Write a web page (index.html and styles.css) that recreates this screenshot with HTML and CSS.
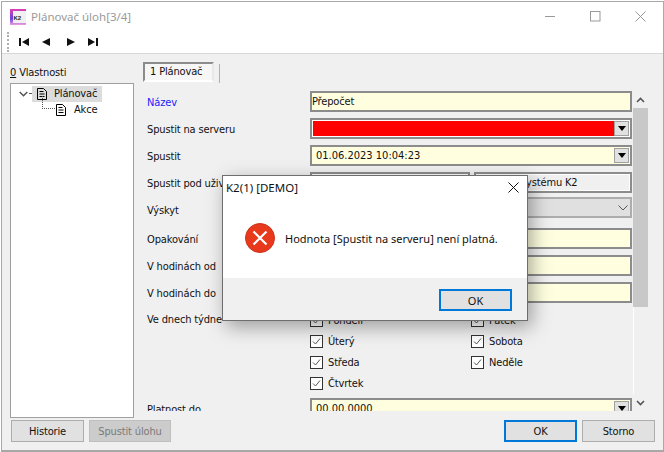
FILE: index.html
```html
<!DOCTYPE html>
<html lang="cs">
<head>
<meta charset="utf-8">
<title>Plánovač úloh[3/4]</title>
<link rel="stylesheet" href="styles.css">
</head>
<body>
<div class="window">
  <header class="titlebar">
    <svg class="logo" width="16" height="16" viewBox="0 0 16 16">
      <defs><linearGradient id="lg" x1="0" y1="0" x2="0" y2="1"><stop offset="0" stop-color="#e040b0"/><stop offset=".6" stop-color="#6a40e0"/><stop offset="1" stop-color="#f0a0e0"/></linearGradient></defs>
      <rect x="0" y="0" width="16" height="16" fill="url(#lg)"/>
      <rect x="3" y="2" width="13" height="12" fill="#f0f0f0"/>
      <text class="logo-text" x="3.5" y="10.5">K2</text>
    </svg>
    <span class="title">Plánovač úloh[3/4]</span>
    <div class="caption">
      <svg width="11" height="11" viewBox="0 0 11 11"><path d="M0 5.5h10" stroke="#999" fill="none"/></svg>
      <svg width="11" height="11" viewBox="0 0 11 11"><rect x=".5" y=".5" width="9.5" height="9.5" stroke="#999" fill="none"/></svg>
      <svg width="11" height="11" viewBox="0 0 11 11"><path d="M.5.5l10 10M10.5.5l-10 10" stroke="#999" fill="none"/></svg>
    </div>
  </header>
  <nav class="toolbar">
    <span class="grip"></span>
    <svg class="nav n1" width="10" height="8" viewBox="0 0 10 8"><path d="M0 0h2v8H0zM10 0v8L3 4z"/></svg>
    <svg class="nav n2" width="8" height="8" viewBox="0 0 8 8"><path d="M8 0v8L0 4z"/></svg>
    <svg class="nav n3" width="8" height="8" viewBox="0 0 8 8"><path d="M0 0v8l8-4z"/></svg>
    <svg class="nav n4" width="10" height="8" viewBox="0 0 10 8"><path d="M10 0H8v8h2zM0 0v8l7-4z"/></svg>
  </nav>
  <main class="body">
    <div class="content">
      <section class="left">
        <div class="left-label"><u>0</u> Vlastnosti</div>
        <div class="tree">
          <div class="tree-row">
            <svg class="chev" width="9" height="6" viewBox="0 0 9 6"><path d="M.7 1l3.800 3.800L8.300 1" stroke="#555" stroke-width="1.5" fill="none"/></svg>
            <span class="dots-h"></span>
            <span class="sel">
              <svg class="doc" width="10" height="12" viewBox="0 0 10 12"><path d="M.5.5h6l3 3v8H.5zM2.500 3.500h4M2.500 6h5M2.500 8.500h5" stroke="#000" fill="none"/></svg>
              <span class="node">Plánovač</span>
            </span>
          </div>
          <div class="tree-row child">
            <span class="dots-l"></span>
            <svg class="doc" width="10" height="12" viewBox="0 0 10 12"><path d="M.5.5h6l3 3v8H.5zM2.500 3.500h4M2.500 6h5M2.500 8.500h5" stroke="#000" fill="none"/></svg>
            <span class="node">Akce</span>
          </div>
        </div>
      </section>
      <section class="right">
        <div class="tabs"><span class="tab">1 Plánovač</span><span class="tab-sep"></span></div>
        <div class="scroll-area">
          <div class="form">
            <div class="row"><label class="blue">Název</label><div class="field">Přepočet</div></div>
            <div class="row"><label>Spustit na serveru</label><div class="field invalid"><span class="dd"><i></i></span></div></div>
            <div class="row"><label>Spustit</label><div class="field date">01.06.2023 10:04:23<span class="dd"><i></i></span></div></div>
            <div class="row"><label>Spustit pod uživatelem</label><div class="split"><div class="field plain"></div><div class="field plain">Správce systému K2</div></div></div>
            <div class="row short"><label>Výskyt</label><div class="field gray"><svg width="10" height="6" viewBox="0 0 10 6"><path d="M.5.5L5 5 9.500.5" stroke="#555" fill="none"/></svg></div></div>
            <div class="row"><label>Opakování</label><div class="field"></div></div>
            <div class="row"><label>V hodinách od</label><div class="field"></div></div>
            <div class="row"><label>V hodinách do</label><div class="field"></div></div>
            <div class="days">
              <label>Ve dnech týdne</label>
              <div class="day-grid">
                <div class="day"><svg class="cb" width="13" height="13" viewBox="0 0 13 13"><rect x=".5" y=".5" width="12" height="12" fill="#fff" stroke="#333"/><path d="M3 6.500l2.500 2.500L10 3.500" stroke="#555" fill="none"/></svg>Pondělí</div>
                <div class="day"><svg class="cb" width="13" height="13" viewBox="0 0 13 13"><rect x=".5" y=".5" width="12" height="12" fill="#fff" stroke="#333"/><path d="M3 6.500l2.500 2.500L10 3.500" stroke="#555" fill="none"/></svg>Pátek</div>
                <div class="day"><svg class="cb" width="13" height="13" viewBox="0 0 13 13"><rect x=".5" y=".5" width="12" height="12" fill="#fff" stroke="#333"/><path d="M3 6.500l2.500 2.500L10 3.500" stroke="#555" fill="none"/></svg>Úterý</div>
                <div class="day"><svg class="cb" width="13" height="13" viewBox="0 0 13 13"><rect x=".5" y=".5" width="12" height="12" fill="#fff" stroke="#333"/><path d="M3 6.500l2.500 2.500L10 3.500" stroke="#555" fill="none"/></svg>Sobota</div>
                <div class="day"><svg class="cb" width="13" height="13" viewBox="0 0 13 13"><rect x=".5" y=".5" width="12" height="12" fill="#fff" stroke="#333"/><path d="M3 6.500l2.500 2.500L10 3.500" stroke="#555" fill="none"/></svg>Středa</div>
                <div class="day"><svg class="cb" width="13" height="13" viewBox="0 0 13 13"><rect x=".5" y=".5" width="12" height="12" fill="#fff" stroke="#333"/><path d="M3 6.500l2.500 2.500L10 3.500" stroke="#555" fill="none"/></svg>Neděle</div>
                <div class="day"><svg class="cb" width="13" height="13" viewBox="0 0 13 13"><rect x=".5" y=".5" width="12" height="12" fill="#fff" stroke="#333"/><path d="M3 6.500l2.500 2.500L10 3.500" stroke="#555" fill="none"/></svg>Čtvrtek</div>
              </div>
            </div>
            <div class="row last"><label>Platnost do</label><div class="field date">00.00.0000<span class="dd"><i></i></span></div></div>
          </div>
          <div class="scrollbar">
            <svg class="arrow" width="9" height="6" viewBox="0 0 9 6"><path d="M1 5l3.500-3.500L8 5" stroke="#555" stroke-width="1.6" fill="none"/></svg>
            <div class="track"><div class="thumb"></div></div>
            <svg class="arrow" width="9" height="6" viewBox="0 0 9 6"><path d="M1 1l3.500 3.500L8 1" stroke="#555" stroke-width="1.6" fill="none"/></svg>
          </div>
        </div>
      </section>
    </div>
    <footer class="footer">
      <button class="btn w73">Historie</button>
      <button class="btn w82 disabled">Spustit úlohu</button>
      <span class="spacer"></span>
      <button class="btn w73 primary">OK</button>
      <button class="btn w73">Storno</button>
    </footer>
  </main>
  <div class="dialog">
    <div class="dlg-title"><span>K2(1) [DEMO]</span><svg width="11" height="11" viewBox="0 0 11 11"><path d="M.5.5l10 10M10.500.5l-10 10" stroke="#111" fill="none"/></svg></div>
    <div class="dlg-body">
      <svg width="30" height="30" viewBox="0 0 30 30"><circle cx="15" cy="15" r="14.500" fill="#e8391c" stroke="#c9341d"/><path d="M8.500 8.500l13 13M21.500 8.500l-13 13" stroke="#fff" stroke-width="2.200" fill="none"/></svg>
      <span>Hodnota [Spustit na serveru] není platná.</span>
    </div>
    <div class="dlg-foot"><button class="btn w73 primary">OK</button></div>
  </div>
</div>
</body>
</html>
```

FILE: styles.css
```css
* { box-sizing: border-box; }
html, body { margin: 0; padding: 0; }
body {
  width: 664px; height: 452px; overflow: hidden; background: #fff;
  font-family: "DejaVu Sans", sans-serif; font-stretch: condensed; font-size: 11px; letter-spacing: -.15px; color: #111;
}
.window {
  position: relative; width: 663px; height: 451px; margin: 1px 0 0 1px;
  border: 1px solid #a8a8a8; border-bottom-width: 2px; display: flex; flex-direction: column; background: #fff;
}
.titlebar { height: 29px; flex: none; display: flex; align-items: center; padding: 0 0 0 8px; letter-spacing: 0; }
.logo { flex: none; margin-right: 5px; }
.logo-text { font: 700 6px "Liberation Sans", sans-serif; fill: #222; }
.title { color: #9a9a9a; font: 11.5px "Noto Sans", sans-serif; }
.caption { margin-left: auto; display: flex; gap: 34px; padding-right: 17px; }
.toolbar { height: 23px; flex: none; display: flex; align-items: center; border-bottom: 1px solid #d8d8d8; padding-left: 5px; }
.grip { width: 2px; height: 20px; border-left: 2px dotted #b0b0b0; margin-right: 10px; }
.nav { fill: #111; flex: none; }
.n1 { margin-right: 13px; } .n2 { margin-right: 17px; } .n3 { margin-right: 13px; }
.body { flex: 1; min-height: 0; background: #f0f0f0; display: flex; flex-direction: column; padding: 8px; }
.content { flex: 1; min-height: 0; display: flex; }
.left { width: 124px; flex: none; display: flex; flex-direction: column; margin-right: 9px; }
.left-label { height: 21px; line-height: 22px; }
.tree { flex: 1; background: #fff; border: 1px solid #a0a0a0; padding: 1px 0 0 8px; }
.tree-row { display: flex; align-items: center; height: 17px; }
.chev { flex: none; margin-right: 1px; }
.dots-h { width: 2px; border-top: 1px dotted #555; margin-right: 1px; }
.sel { display: flex; align-items: center; height: 16px; background: #dcdcdc; width: 70px; padding-left: 5px; }
.doc { flex: none; }
.node { padding-left: 7px; line-height: 17px; }
.child { position: relative; padding-left: 37px; margin-top: -1px; }
.dots-l { position: absolute; left: 23px; top: -5px; width: 13px; height: 13px; border-left: 1px dotted #555; border-bottom: 1px dotted #555; }
.child .node { padding-left: 8px; }
.right { flex: 1; min-width: 0; display: flex; flex-direction: column; }
.tabs { height: 20px; flex: none; display: flex; }
.tab { width: 71px; height: 20px; border: 2px solid #8c8c8c; border-right-color: #e8e8e8; border-bottom-color: #fff; background: #f6f6f6; line-height: 16px; padding-left: 5px; }
.tab-sep { width: 1px; height: 19px; background: #b0b0b0; margin: 2px 0 0 5px; }
.scroll-area { flex: 1; min-height: 0; display: flex; overflow: hidden; margin-top: 9px; }
.form { width: 489px; flex: none; height: 320px; overflow: hidden; padding-left: 4px; }
.row { display: flex; align-items: center; height: 21px; margin-bottom: 6px; }
.row > label { padding-top: 1px; }
.row.short { margin-top: -2px; margin-bottom: 10px; }
.row.short > label { padding-top: 5px; }
.row label, .days label { width: 163px; flex: none; }
.blue { color: #2020ff; }
.field { flex: 1; height: 21px; border: 2px solid #8c8c8c; background: #ffffe0; padding-left: 0; display: flex; align-items: center; min-width: 0; white-space: nowrap; }
.field.date { padding-left: 4px; letter-spacing: 0; }
.field.invalid { background: #f00; box-shadow: inset 0 0 0 1px #fff; }
.field.plain { background: #f0f0f0; box-shadow: inset 0 0 0 1px #fff; padding-left: 3px; }
.field.gray { background: #e0e0e0; border-color: #adadad; justify-content: flex-end; padding-right: 2px; }
.split { flex: 1; display: flex; gap: 4px; min-width: 0; }
.split .field:first-child { flex: none; width: 160px; }
.dd { margin-left: auto; width: 15px; height: 15px; margin-right: 1px; background: #e1e1e1; border: 1px solid #a0a0a0; display: flex; align-items: center; justify-content: center; flex: none; }
.dd i { border: 4px solid transparent; border-top: 5px solid #000; border-bottom: 0; }
.days { display: flex; height: 84px; margin-top: 1px; margin-bottom: 5px; }
.days label { line-height: 21px; }
.day-grid { display: grid; grid-template-columns: 161px 1fr; grid-auto-rows: 21px; padding-top: 1px; }
.day { display: flex; align-items: center; gap: 5px; }
.cb { flex: none; }
.scrollbar { width: 15px; flex: none; margin-left: 1px; display: flex; flex-direction: column; align-items: center; height: 320px; }
.arrow { flex: none; margin: 6px 0 5px; }
.track { flex: 1; width: 100%; box-shadow: inset 1px 0 #fff; }
.thumb { height: 199px; background: #c8c8c8; }
.footer { height: 22px; flex: none; display: flex; gap: 5px; margin-top: 2px; padding-left: 1px; }
.spacer { flex: 1; }
.btn { height: 22px; font: inherit; font-stretch: condensed; letter-spacing: inherit; color: #111; background: #e1e1e1; border: 1px solid #adadad; padding: 0; }
.w73 { width: 73px; }
.w82 { width: 82px; }
.primary { border: 2px solid #0078d7; }
.disabled { background: #ccc; color: #7a7a7a; border-color: #bfbfbf; }
.dialog {
  position: absolute; left: 220px; top: 173px; width: 306px; height: 146px; background: #fff;
  border: 1px solid #6e6e6e; box-shadow: 4px 6px 18px rgba(0,0,0,.35); display: flex; flex-direction: column;
  font-family: "Noto Sans", sans-serif; font-stretch: normal; letter-spacing: 0;
}
.dlg-title { height: 23px; flex: none; display: flex; align-items: center; justify-content: space-between; padding: 0 8px 0 3px; font-size: 11.5px; }
.dlg-body { flex: 1; display: flex; align-items: center; gap: 10px; padding: 0 0 1px 22px; font-size: 11px; }
.dlg-foot { height: 42px; flex: none; background: #f0f0f0; display: flex; justify-content: flex-end; align-items: flex-start; padding: 11px 15px 0 0; }
.dlg-foot .btn { font-family: "Noto Sans", sans-serif; }
```
